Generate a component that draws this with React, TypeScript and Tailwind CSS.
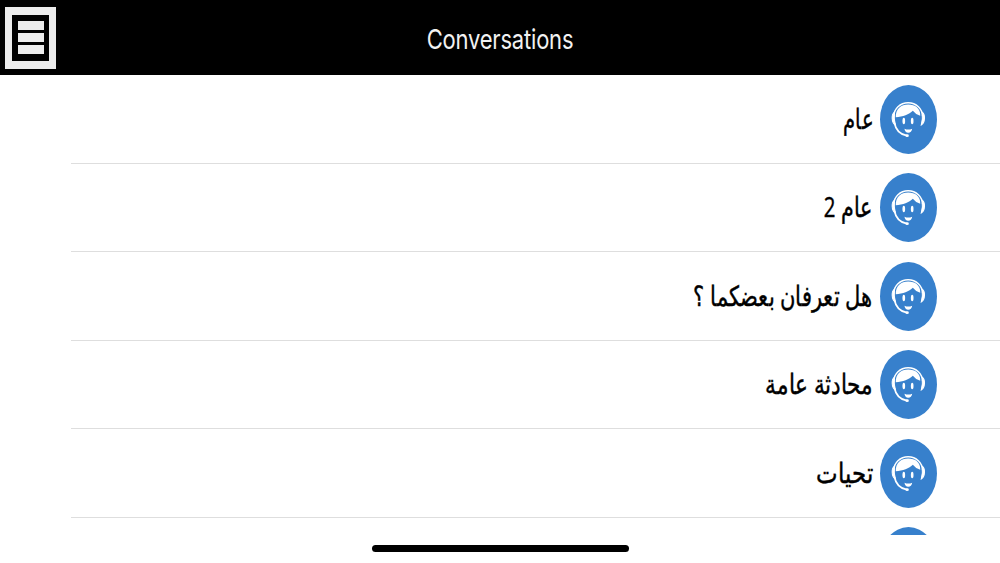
const CONVERSATIONS = [
  { id: 1, title: 'عام', stretch: 'scale-x-[0.88]' },
  { id: 2, title: 'عام 2', stretch: 'scale-x-[0.93]' },
  { id: 3, title: 'هل تعرفان بعضكما ؟', stretch: 'scale-x-[0.945]' },
  { id: 4, title: 'محادثة عامة', stretch: 'scale-x-[0.97]' },
  { id: 5, title: 'تحيات', stretch: 'scale-x-[1.03]' },
  { id: 6, title: '', stretch: 'scale-x-100' },
]

function AgentAvatar() {
  return (
    <svg viewBox="0 0 170 207" preserveAspectRatio="none" className="h-[69px] w-[57px] shrink-0">
      <ellipse cx="85" cy="103.5" rx="85" ry="103.5" fill="#3780cc" />
      {/* Headset band and ear cups */}
      <path d="M41 94A43 41 0 0 1 127 94" fill="none" stroke="#fff" strokeWidth="4.5" />
      <path d="M43 82C34 86 33 112 46 120Q41 100 43 82Z" fill="#fff" stroke="#fff" strokeWidth="3" />
      <path d="M126 82C135 86 136 113 123 120Q128 100 126 82Z" fill="#fff" stroke="#fff" strokeWidth="3" />
      {/* Hair */}
      <path d="M47 97C46 72 63 58.500 84 58.500S121 70 120 92Q106 88 98 77C87 88 68 95 47 97Z" fill="#fff" />
      {/* Jaw and microphone */}
      <path d="M43 114C47 134 59 148 80 152" fill="none" stroke="#fff" strokeWidth="5" />
      <ellipse cx="81" cy="152" rx="5" ry="4" fill="#fff" />
      <ellipse cx="71" cy="108" rx="4" ry="10" fill="#fff" />
      <ellipse cx="96" cy="108" rx="4" ry="10" fill="#fff" />
      <path d="M73 131Q84 136 96 131Q94 143 84 143Q75 143 73 131Z" fill="#fff" />
    </svg>
  )
}

export default function App() {
  return (
    <div className="flex h-[563px] w-[1000px] flex-col overflow-hidden bg-white font-['Open_Sans','Noto_Sans',sans-serif]">
      <header className="grid h-[75px] shrink-0 grid-cols-[1fr_auto_1fr] items-center bg-black">
        <button
          type="button"
          aria-label="Menu"
          className="ml-[5px] flex h-[62px] w-[51px] flex-col items-center justify-center gap-[3px] border-[7px] border-y-8 border-[#ececec]"
        >
          <span className="h-[9px] w-[26px] bg-[#ececec]" />
          <span className="h-[9px] w-[26px] bg-[#ececec]" />
          <span className="h-[9px] w-[26px] bg-[#ececec]" />
        </button>
        <h1 className="mt-[3px] origin-center scale-y-[1.25] font-['Inter',sans-serif] text-[22px] leading-none tracking-[-0.2px] text-[#f2f2f2]">
          Conversations
        </h1>
      </header>

      <main className="h-[460px] shrink-0 overflow-hidden pt-[0.6px]">
        {CONVERSATIONS.map(c => (
          <div key={c.id} dir="rtl" className="relative h-[88.4px] pr-[63px]">
            <div className="flex h-[88px] items-center gap-[7.5px]">
              <AgentAvatar />
              <span
                className={`${c.stretch} mb-[3px] origin-right scale-y-[1.26] whitespace-nowrap text-[22px] leading-none text-black [-webkit-text-stroke:0.35px_black]`}
              >
                {c.title}
              </span>
            </div>
            <div className="absolute right-0 bottom-0 left-[71px] h-px bg-[#dedede]" />
          </div>
        ))}
      </main>

      <div className="mx-auto mt-[10px] h-[7px] w-[257px] shrink-0 rounded-full bg-black" />
    </div>
  )
}
